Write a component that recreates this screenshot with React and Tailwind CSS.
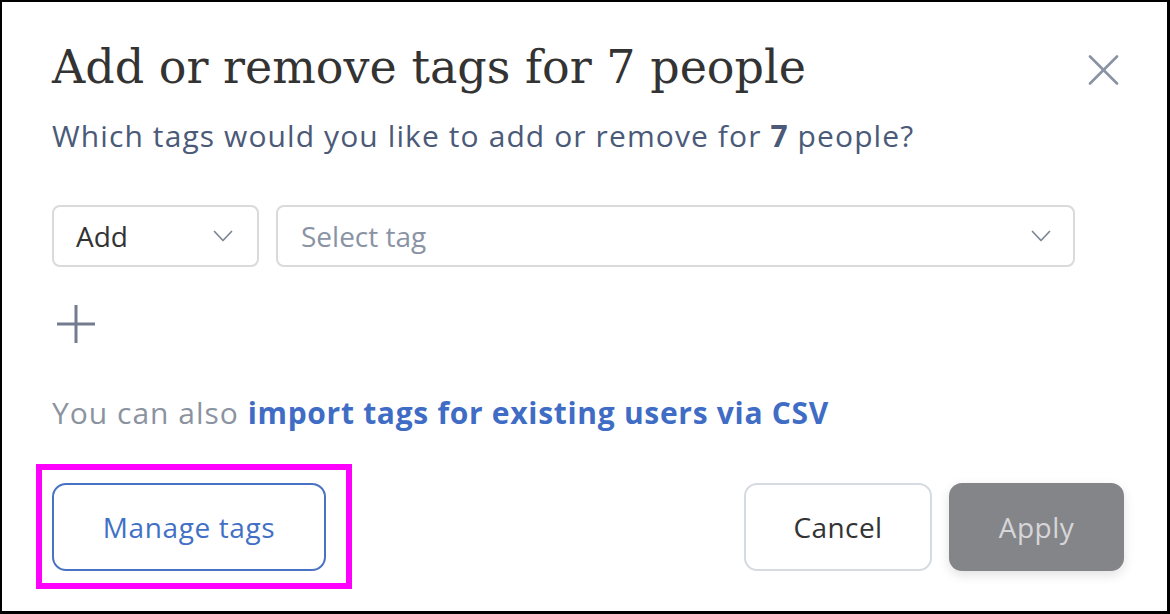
import React from 'react';

const Chevron = () => (
  <svg width="20" height="12" viewBox="0 0 20 12" fill="none">
    <polyline points="1.5,1.5 10,10.5 18.5,1.5" stroke="#7d8597" strokeWidth="1.7" strokeLinecap="round" strokeLinejoin="round" />
  </svg>
);

const App = () => {
  return (
    <div
      className="w-[1170px] h-[614px] bg-white border-l-2 border-t-2 border-r-[3px] border-b-[3px] border-black flex flex-col pl-[50px] pr-[43px] pt-[37px]"
      style={{ fontFamily: '"Open Sans", "Noto Sans", sans-serif' }}
    >
      {/* Header */}
      <div className="flex justify-between items-start">
        <h1
          className="text-[46px] leading-[56px] font-normal text-[#333333]"
          style={{ fontFamily: '"DejaVu Serif", serif' }}
        >
          Add or remove tags for 7 people
        </h1>
        <button className="mt-[16px] mr-[5px] cursor-pointer">
          <svg width="31" height="30" viewBox="0 0 31 30" fill="none">
            <line x1="2" y1="1.5" x2="29" y2="28.5" stroke="#8a93a3" strokeWidth="2.6" strokeLinecap="round" />
            <line x1="29" y1="1.5" x2="2" y2="28.5" stroke="#8a93a3" strokeWidth="2.6" strokeLinecap="round" />
          </svg>
        </button>
      </div>

      <p className="mt-[21px] text-[30px] leading-[40px] tracking-[1.1px] text-[#4b5a78]">
        Which tags would you like to add or remove for <span className="font-bold">7</span> people?
      </p>

      {/* Tag row */}
      <div className="mt-[49px] flex gap-[17px]">
        <div className="w-[207px] h-[62px] border-2 border-[#dadada] rounded-[8px] flex items-center justify-between pl-[22px] pr-[24px] text-[28px] text-[#333333]">
          <span>Add</span>
          <Chevron />
        </div>
        <div className="w-[799px] h-[62px] border-2 border-[#dadada] rounded-[8px] flex items-center justify-between pl-[23px] pr-[22px] text-[28px] text-[#8a93a4]">
          <span>Select tag</span>
          <Chevron />
        </div>
      </div>

      <button className="mt-[38px] ml-[5px] w-[38px] h-[38px] cursor-pointer">
        <svg width="38" height="38" viewBox="0 0 38 38" fill="none">
          <line x1="19" y1="0" x2="19" y2="38" stroke="#737b8f" strokeWidth="3" />
          <line x1="0" y1="19" x2="38" y2="19" stroke="#737b8f" strokeWidth="3" />
        </svg>
      </button>

      <p className="mt-[50px] text-[30px] leading-[40px] tracking-[1px] text-[#8b93a0]">
        You can also <span className="font-bold tracking-[0.7px] text-[#3f6cc4]">import tags for existing users via CSV</span>
      </p>

      {/* Footer */}
      <div className="mt-[50px] flex justify-between items-center">
        <div className="relative">
          <button className="w-[274px] h-[88px] border-2 border-[#4a72c4] rounded-[14px] text-[28px] tracking-[0.6px] text-[#4270c6] cursor-pointer">
            Manage tags
          </button>
          {/* highlight annotation */}
          <div className="absolute left-[-16px] top-[-19px] w-[316px] h-[125px] border-[6px] border-[#ff00ff] pointer-events-none" />
        </div>
        <div className="flex gap-[17px]">
          <button className="w-[188px] h-[88px] border-2 border-[#d6dae1] rounded-[13px] text-[28px] tracking-[0.4px] text-[#333333] cursor-pointer">
            Cancel
          </button>
          <button className="w-[175px] h-[88px] rounded-[13px] bg-[#848589] text-[28px] tracking-[0.5px] text-[#d6d6d9] shadow-[0_4px_12px_rgba(0,0,0,0.12)]">
            Apply
          </button>
        </div>
      </div>
    </div>
  );
};

export default App;
